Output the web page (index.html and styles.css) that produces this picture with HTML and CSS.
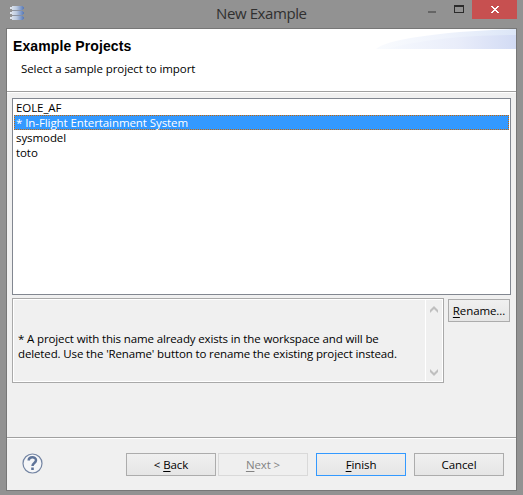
FILE: index.html
```html
<!DOCTYPE html>
<html lang="en">
<head>
<meta charset="utf-8">
<title>New Example</title>
<link rel="stylesheet" href="styles.css">
</head>
<body>
<div class="window">
  <header class="titlebar">
    <svg class="app-icon" width="14" height="15" viewBox="0 0 14 15">
      <defs><linearGradient id="disk"><stop offset="0" stop-color="#e4e9f0"/><stop offset=".45" stop-color="#bdcbe0"/><stop offset="1" stop-color="#5677b5"/></linearGradient></defs>
      <path d="M2 0h11v1h1v2h-1v1H2V3H0V1h2zM2 5h11v1h1v2h-1v1H2V8H0V6h2zM2 10h11v1h1v2h-1v1H2v-1H0v-2h2z" fill="url(#disk)"/>
      <path d="M3 4h9v1H3zM3 9h9v1H3z" fill="#8b93a2"/>
    </svg>
    <h1 class="title">New Example</h1>
    <svg class="minmax" width="36" height="19" viewBox="0 0 36 19" shape-rendering="crispEdges">
      <path d="M0 11h8v2H0z" fill="#656565"/>
      <path d="M26 5h10v8H26zM27 7v5h8V7z" fill="#2b2b2b" fill-rule="evenodd"/>
    </svg>
    <div class="close">
      <svg width="8" height="7" viewBox="0 0 8 7" shape-rendering="crispEdges"><path d="M0 0h2v1h1v1h2V1h1V0h2v1H7v1H6v1H5v1h1v1h1v1h1v1H6V6H5V5H3v1H2v1H0V6h1V5h1V4h1V3H2V2H1V1H0z" fill="#fff"/></svg>
    </div>
  </header>
  <main class="client">
    <section class="banner">
      <div class="banner-text">
        <h2>Example Projects</h2>
        <p>Select a sample project to import</p>
      </div>
      <svg class="swoosh" width="140" height="20" viewBox="0 0 140 20">
        <defs>
          <linearGradient id="sky"><stop offset="0" stop-color="#f9fbfe"/><stop offset=".5" stop-color="#eff3fc"/><stop offset="1" stop-color="#dce6f7"/></linearGradient>
          <linearGradient id="wave"><stop offset="0" stop-color="#f6f9fe"/><stop offset=".55" stop-color="#e9edfa"/><stop offset="1" stop-color="#d2dbf4"/></linearGradient>
        </defs>
        <path d="M0 20C8 11 65 2 140 0v20z" fill="url(#sky)"/>
        <path d="M10 20C40 12 85 6 140 6v14z" fill="url(#wave)"/>
      </svg>
    </section>
    <section class="content">
      <ul class="list">
        <li>EOLE_AF</li>
        <li class="selected">* In-Flight Entertainment System</li>
        <li>sysmodel</li>
        <li>toto</li>
      </ul>
      <div class="row">
        <div class="message">
          <p>* A project with this name already exists in the workspace and will be<br>deleted. Use the 'Rename' button to rename the existing project instead.</p>
          <div class="scrollbar">
            <svg width="8" height="7" viewBox="0 0 8 7"><path d="M4 0l4 4v3L4 3 0 7V4z" fill="#bfbfbf"/></svg>
            <svg width="8" height="7" viewBox="0 0 8 7"><path d="M4 7L0 3V0l4 4 4-4v3z" fill="#bfbfbf"/></svg>
          </div>
        </div>
        <button class="btn rename"><u>R</u>ename...</button>
      </div>
    </section>
    <footer class="footer">
      <svg class="help" width="21" height="21" viewBox="0 0 21 21" fill="none">
        <circle cx="10.5" cy="10.5" r="9.5" fill="#f5f6f8" stroke="#7485a3" stroke-width="1.2"/>
        <path d="M6.7 7.5C6.7 3.4 14 3.2 14 7.2c0 2.8-3.5 2.7-3.5 5.8" stroke="#5f7499" stroke-width="2.5"/>
        <path d="M9.2 14.5h2.6V17H9.2z" fill="#5f7499"/>
      </svg>
      <div class="buttons">
        <button class="btn">&lt; <u>B</u>ack</button>
        <button class="btn next" disabled><u>N</u>ext &gt;</button>
        <button class="btn finish"><u>F</u>inish</button>
        <button class="btn cancel">Cancel</button>
      </div>
    </footer>
  </main>
</div>
</body>
</html>
```
FILE: styles.css
```css
* { box-sizing: border-box; }
body {
  margin: 0;
  font: 11.5px/15px "Open Sans", "Noto Sans", sans-serif;
  letter-spacing: -0.08px;
  color: #000;
}
h1, h2, p, ul { margin: 0; padding: 0; }
.window {
  width: 523px;
  height: 495px;
  padding: 0 6px 4px;
  background: #929292;
  overflow: hidden;
}
.titlebar {
  display: flex;
  align-items: flex-start;
  height: 28px;
}
.app-icon { margin: 6px 0 0 4px; }
.title {
  flex: 1;
  padding: 3px 0 0 192px;
  font-size: 15px;
  line-height: 20px;
  font-weight: 400;
  letter-spacing: -0.4px;
  color: #303030;
  white-space: nowrap;
}
.minmax { margin-right: 8px; }
.close {
  display: flex;
  justify-content: center;
  width: 45px;
  height: 19px;
  padding-top: 6px;
  background: #c75050;
}
.client {
  display: flex;
  flex-direction: column;
  width: 511px;
  height: 463px;
  border: 1px solid #777;
  background: #f0f0f0;
}
.banner {
  display: flex;
  justify-content: space-between;
  align-items: flex-start;
  height: 63px;
  background: #fff;
  border-bottom: 1px solid #a0a0a0;
}
.banner-text { padding: 9px 0 0 6px; white-space: nowrap; }
h2 {
  font: bold 14px/16px "Liberation Sans", sans-serif;
  letter-spacing: 0.1px;
}
.banner p { margin: 7px 0 0 8px; }
.content {
  flex: 1;
  padding: 5px 5px 0;
  border-top: 1px solid #fff;
}
.list {
  width: 499px;
  height: 197px;
  padding: 1px;
  border: 1px solid #828790;
  background: #fff;
  list-style: none;
}
.list li { height: 15px; padding-left: 2px; line-height: 14px; white-space: nowrap; }
.list li:not(.selected) { padding-top: 1px; }
.list .selected {
  padding: 0 0 0 1px;
  line-height: 13px;
  color: #fff;
  background: #3399ff;
  border: 1px dotted #cc6600;
}
.row { display: flex; gap: 4px; margin-top: 3px; align-items: flex-start; }
.message {
  display: flex;
  width: 432px;
  height: 85px;
  border: 1px solid #a9a9a9;
  box-shadow: inset 0 0 0 1px #fff;
}
.message p {
  width: 412px;
  padding: 32px 0 0 5px;
  letter-spacing: -0.13px;
  white-space: nowrap;
}
.scrollbar {
  display: flex;
  flex-direction: column;
  justify-content: space-between;
  align-items: center;
  width: 17px;
  padding: 7px 0 6px;
  border-left: 1px solid #fff;
}
.btn {
  width: 90px;
  height: 23px;
  padding: 0;
  border: 1px solid #acacac;
  background: linear-gradient(#f0f0f0, #e5e5e5);
  font: inherit;
  letter-spacing: -0.1px;
  color: #000;
  white-space: nowrap;
}
.btn u { text-underline-offset: 2px; text-decoration-thickness: 1px; text-decoration-skip-ink: none; }
.rename { width: 62px; margin-top: 1px; }
.footer {
  display: flex;
  align-items: flex-start;
  height: 53px;
  padding: 14px 12px 0 15px;
  border-top: 1px solid #a0a0a0;
  box-shadow: inset 0 1px #fff;
}
.help { margin-top: 1px; }
.buttons { display: flex; flex: 1; justify-content: flex-end; margin-top: 1px; }
.next { margin-left: 2px; border-color: #d9d9d9; background: #efefef; color: #838383; }
.finish { margin-left: 8px; border-color: #3399ff; }
.cancel { margin-left: 8px; }
```
